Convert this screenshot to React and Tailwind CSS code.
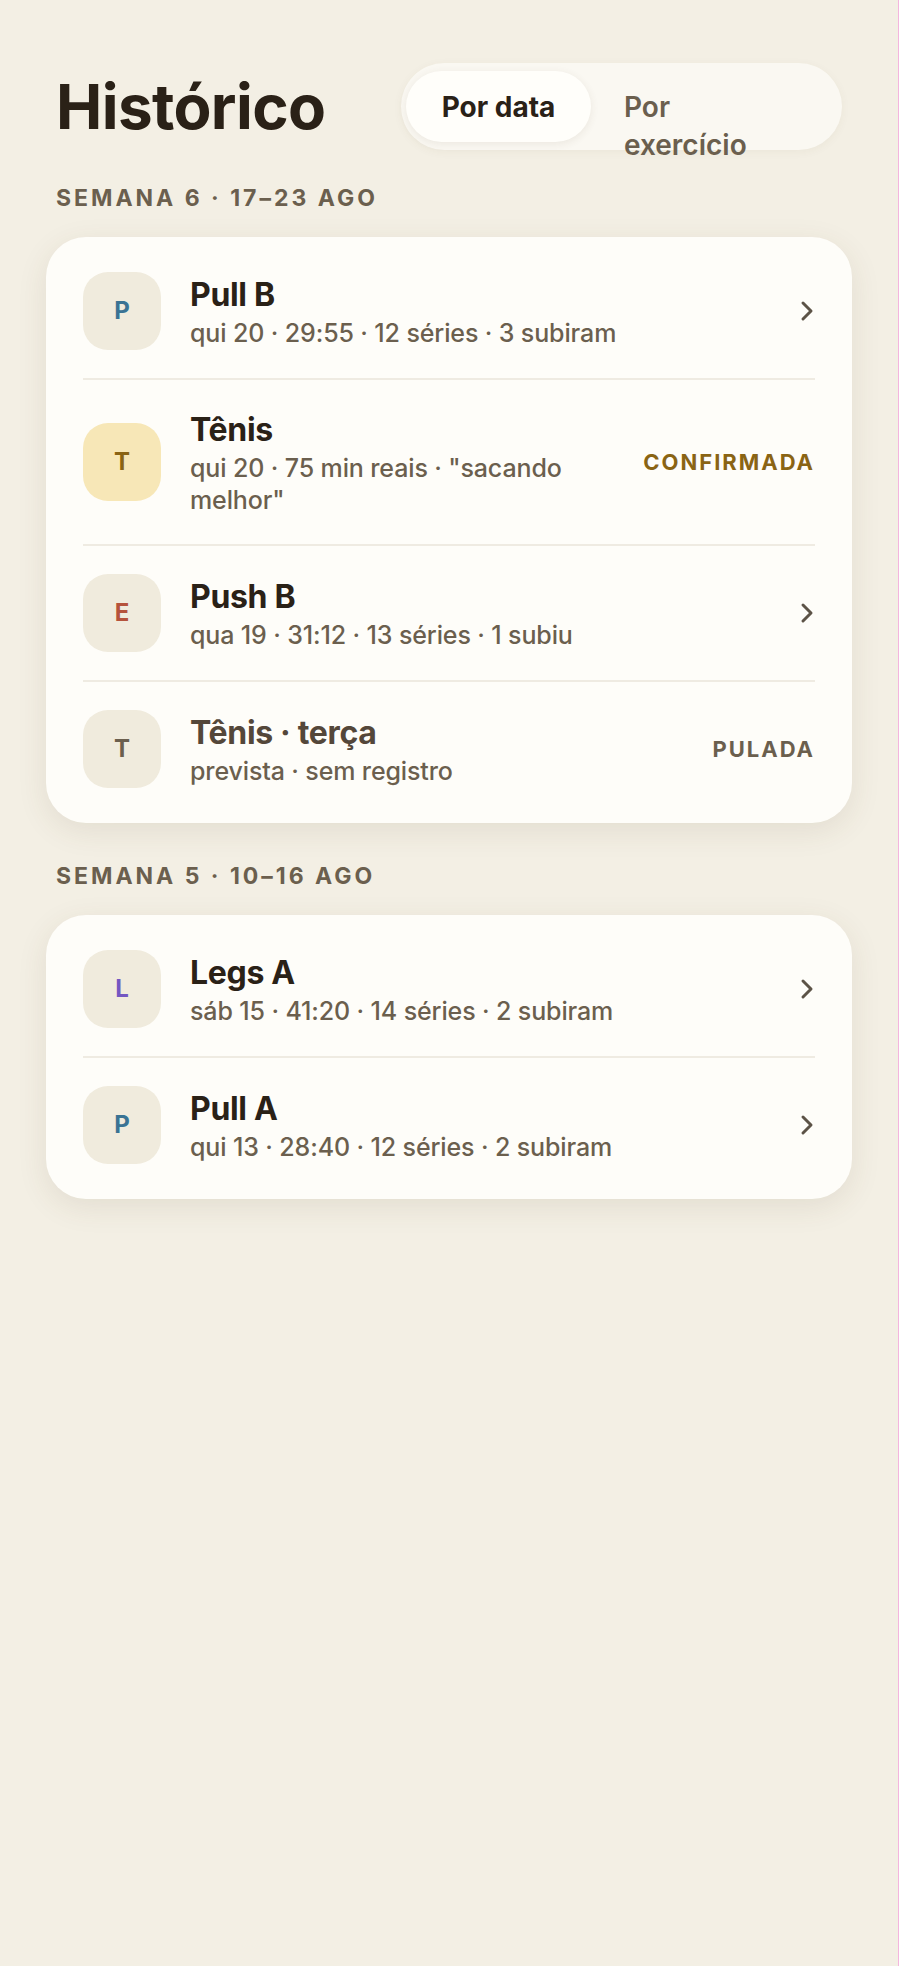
const weeks = [
  {
    label: "SEMANA 6 · 17–23 AGO",
    items: [
      { letter: "P", tone: "text-[#3a7394]", box: "bg-[#f0ebdd]", title: "Pull B", sub: "qui 20 · 29:55 · 12 séries · 3 subiram", chevron: true },
      { letter: "T", tone: "text-[#8a6414]", box: "bg-[#f7e7b7]", title: "Tênis", sub: 'qui 20 · 75 min reais · "sacando melhor"', status: "CONFIRMADA", statusTone: "text-[#8a6414]" },
      { letter: "E", tone: "text-[#b5533c]", box: "bg-[#f0ebdd]", title: "Push B", sub: "qua 19 · 31:12 · 13 séries · 1 subiu", chevron: true },
      { letter: "T", tone: "text-[#6b5f4e]", box: "bg-[#f0ebdd]", title: "Tênis · terça", sub: "prevista · sem registro", status: "PULADA", statusTone: "text-[#6b5f4e]", muted: true }
    ]
  },
  {
    label: "SEMANA 5 · 10–16 AGO",
    items: [
      { letter: "L", tone: "text-[#7457c2]", box: "bg-[#f0ebdd]", title: "Legs A", sub: "sáb 15 · 41:20 · 14 séries · 2 subiram", chevron: true },
      { letter: "P", tone: "text-[#3a7394]", box: "bg-[#f0ebdd]", title: "Pull A", sub: "qui 13 · 28:40 · 12 séries · 2 subiram", chevron: true }
    ]
  }
];

const Chevron = () => (
  <svg width="16" height="22" viewBox="0 0 16 22" fill="none" className="shrink-0">
    <path d="M4 3 L12 11 L4 19" stroke="#5c5347" strokeWidth="3" strokeLinecap="round" strokeLinejoin="round" />
  </svg>
);

const Row = ({ item, last }) => (
  <div className={`flex items-center gap-[29px] py-[28px] ${last ? "" : "border-b-2 border-[#efebe2]"}`}>
    <div className={`w-[78px] h-[78px] shrink-0 rounded-[25px] flex items-center justify-center ${item.box}`}>
      <span className={`text-[24px] font-bold ${item.tone}`}>{item.letter}</span>
    </div>
    <div className="flex-1 min-w-0">
      <div className={`text-[32px] font-bold leading-[44px] tracking-[-0.01em] ${item.muted ? "text-[#54473a]" : "text-[#2a2117]"}`}>
        {item.title}
      </div>
      <div className="text-[25px] font-medium leading-[32px] tracking-[-0.005em] text-[#6b5f4e]">{item.sub}</div>
    </div>
    {item.status && (
      <span className={`ml-4 text-[22px] font-bold tracking-[0.09em] ${item.statusTone}`}>{item.status}</span>
    )}
    {item.chevron && <Chevron />}
  </div>
);

export default function App() {
  return (
    <div
      className="min-h-screen bg-[#f3efe4] border-r border-[#f4b5de] px-[46px]"
      style={{ fontFamily: "Inter, 'Noto Sans', sans-serif" }}
    >
      <header className="flex items-center justify-between px-[10px] pt-[63px]">
        <h1 className="text-[62px] font-bold leading-none tracking-[-0.01em] text-[#2a2117]">Histórico</h1>
        <div className="w-[441px] h-[87px] rounded-full bg-[#faf8f2] shadow-[0_2px_10px_rgba(90,70,40,0.05)] flex items-start pl-[5px] py-[8px]">
          <button className="w-[185px] h-[71px] shrink-0 rounded-full bg-[#fffefa] shadow-[0_2px_8px_rgba(90,70,40,0.09)] py-[16px] text-[28px] font-bold leading-[38px] text-[#2a2117]">
            Por data
          </button>
          <button className="h-[71px] pl-[33px] pt-[17px] text-left">
            <span className="block w-[150px] text-[28px] font-semibold leading-[38px] text-[#6b5f4e]">Por exercício</span>
          </button>
        </div>
      </header>

      <main className="pt-[33px]">
        {weeks.map((week, i) => (
          <section key={week.label} className={i > 0 ? "mt-[38px]" : ""}>
            <h2 className="px-[10px] text-[23px] font-bold leading-[30px] tracking-[0.13em] text-[#6b5f4e]">{week.label}</h2>
            <div className="mt-[24px] rounded-[40px] bg-[#fefdf9] px-[37px] py-[7px] shadow-[0_8px_30px_rgba(90,70,40,0.1)]">
              {week.items.map((item, j) => (
                <Row key={item.title} item={item} last={j === week.items.length - 1} />
              ))}
            </div>
          </section>
        ))}
      </main>
    </div>
  );
}
